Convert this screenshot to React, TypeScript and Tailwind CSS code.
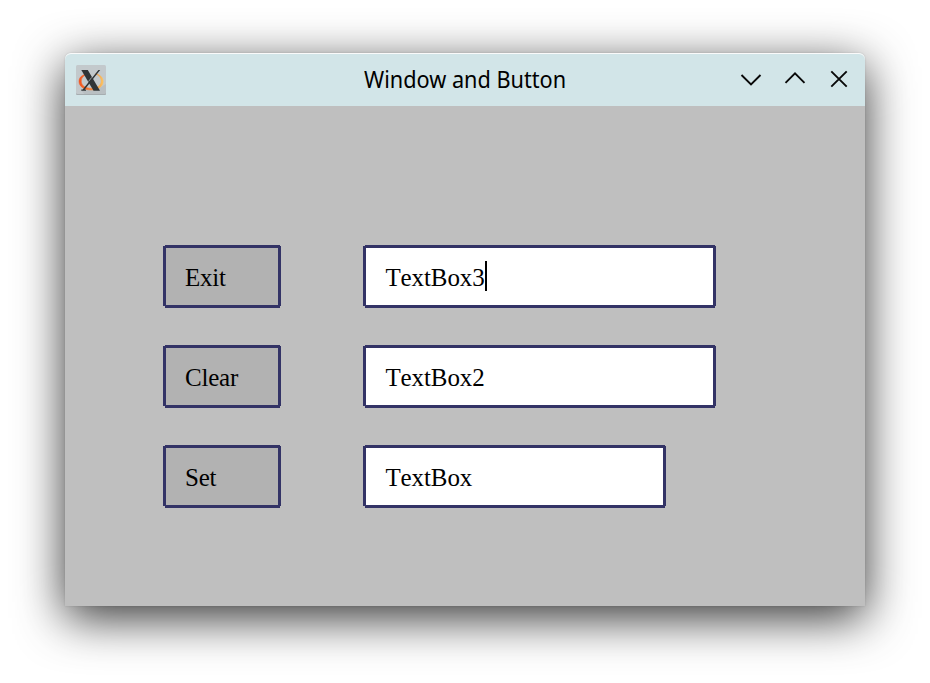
import { ReactNode } from "react";

const frame =
  "h-[63px] border-[3px] border-[#333366] [clip-path:polygon(2px_0,calc(100%_-_1px)_0,calc(100%_-_1px)_1px,100%_1px,100%_61px,calc(100%_-_1px)_61px,calc(100%_-_1px)_100%,2px_100%,2px_61px,0_61px,0_1px,2px_1px)] flex items-center pt-[2px] text-left whitespace-nowrap text-black text-[25px] leading-[30px] [font-kerning:none] font-['Liberation_Serif',serif]";

function PushButton({ children }: { children: ReactNode }) {
  return <button className={`${frame} w-[118px] bg-[#b2b2b2] pl-[19px] tracking-[-0.2px]`}>{children}</button>;
}

function TextBox({ value, width, focused }: { value: string; width: string; focused?: boolean }) {
  return (
    <div className={`${frame} ${width} bg-white pl-[19.4px]`}>
      <span className="tracking-[-0.1px]">{value}</span>
      {focused && <span className="-mt-[3px] h-[30px] w-[2px] bg-black" />}
    </div>
  );
}

function XLogo() {
  return (
    <svg width="30" height="30" viewBox="0 0 30 30">
      <defs>
        <linearGradient id="ring" x1="0" x2="1">
          <stop offset="0" stopColor="#f4531e" />
          <stop offset="0.45" stopColor="#f57a30" />
          <stop offset="1" stopColor="#fbc360" />
        </linearGradient>
      </defs>
      <rect width="30" height="30" rx="1.5" fill="#c3c9cc" />
      <path d="M5 25.5 9.5 30H28.5a1.5 1.5 0 0 0 1.5-1.5V19L22 24Z" fill="#b9bfc2" />
      <path d="M0 28.500A1.500 1.500 0 0 0 1.500 30H28.500A1.500 1.500 0 0 0 30 28.500V28A1.500 1.500 0 0 1 28.500 29H1.500A1.500 1.500 0 0 1 0 28Z" fill="#a6adb0" />
      <path
        d="M10.500 9C6 9.800 3 12.500 3 16.500C3 21.500 8.500 25 15 25C22 25 27.200 21.500 27.200 16.500C27.200 12 23.500 9.500 19.500 8.800C23 10.500 25.200 12.800 25.200 16C25.200 20.500 21 23.300 15.500 23.300C9.500 23.300 5.300 20.600 5.300 16.200C5.300 12.800 7.500 10.500 10.800 9.800Z"
        fill="url(#ring)"
        stroke="url(#ring)"
        strokeWidth="0.500"
      />
      <path d="M5.300 5H11.800L24 25.700H17.500Z" fill="#303436" />
      <path d="M22.400 5H24.200L8.700 24.600H10V25.700H5.300V24.600H6.700Z" fill="#303436" />
      <path d="M15.800 12.300 12.500 16.500" stroke="#c3c9cc" strokeWidth="0.700" />
    </svg>
  );
}

export default function App() {
  return (
    <div className="flex h-[683px] w-[930px] items-start overflow-hidden bg-white px-[65px] pt-[53px]">
      <main className="h-[553px] w-[800px] rounded-t-[6px] bg-[#bfbfbf] shadow-[0_12px_48px_rgba(0,0,0,0.8),0_0_2px_rgba(0,0,0,0.15)]">
        <header className="grid h-[53px] grid-cols-[1fr_auto_1fr] items-center rounded-t-[6px] bg-[#d2e5e8] shadow-[inset_0_1px_0_#fafafa]">
          <div className="pl-[11px]">
            <XLogo />
          </div>
          <h1 className="-mt-px w-[202px] origin-left scale-x-[0.943] whitespace-nowrap font-['Noto_Sans',sans-serif] text-[23px] leading-[30px] text-black">
            Window and Button
          </h1>
          <div className="-mt-[2px] flex justify-end gap-[22px] pr-[15px]">
            {["M1.500 7 11 16.500 20.500 7", "M1.500 14.800 11 5.300 20.500 14.800", "M3.300 3.300 18.700 18.700M18.700 3.300 3.300 18.700"].map((d) => (
              <svg key={d} width="22" height="22" viewBox="0 0 22 22" fill="none" stroke="#080808" strokeWidth="1.900">
                <path d={d} />
              </svg>
            ))}
          </div>
        </header>
        <section className="grid grid-cols-[118px_353px] gap-x-[82px] gap-y-[37px] pt-[139px] pl-[98px]">
          <PushButton>Exit</PushButton>
          <TextBox value="TextBox3" width="w-[353px]" focused />
          <PushButton>Clear</PushButton>
          <TextBox value="TextBox2" width="w-[353px]" />
          <PushButton>Set</PushButton>
          <TextBox value="TextBox" width="w-[303px]" />
        </section>
      </main>
    </div>
  );
}
